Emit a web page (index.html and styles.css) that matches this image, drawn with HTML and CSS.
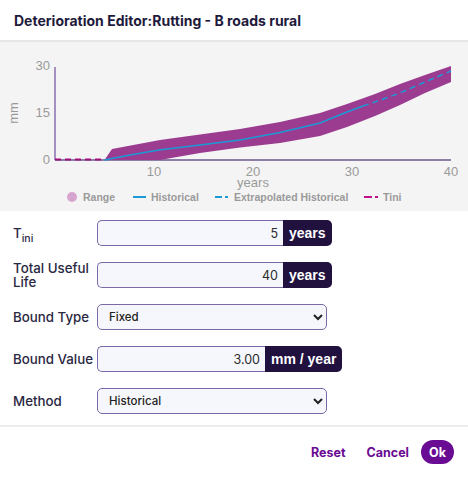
FILE: index.html
```html
<!DOCTYPE html>
<html lang="en">
<head>
    <meta charset="UTF-8">
    <meta name="viewport" content="width=device-width, initial-scale=1.0">
    <title>Deterioration Editor</title>
    <link rel="stylesheet" href="styles.css">
</head>
<body>
    <div class="dialog">
        <div class="dialog-head">
            <h1>Deterioration Editor:Rutting - B roads rural</h1>
        </div>

        <div class="chart">
            <svg width="468" height="169" viewBox="0 42 468 169">
                <!-- axes -->
                <line x1="55" y1="67" x2="55" y2="160" class="axis-y"/>
                <line x1="55" y1="160" x2="451" y2="160" class="axis-x"/>

                <!-- tick labels -->
                <text x="50" y="70" class="tick" text-anchor="end">30</text>
                <text x="50" y="117" class="tick" text-anchor="end">15</text>
                <text x="50" y="164" class="tick" text-anchor="end">0</text>
                <text x="154" y="176" class="tick" text-anchor="middle">10</text>
                <text x="253" y="176" class="tick" text-anchor="middle">20</text>
                <text x="352" y="176" class="tick" text-anchor="middle">30</text>
                <text x="451" y="176" class="tick" text-anchor="middle">40</text>
                <text x="253" y="187" class="tick" text-anchor="middle">years</text>
                <text x="0" y="0" class="tick" text-anchor="middle" transform="translate(18 113) rotate(-90)">mm</text>

                <!-- range band -->
                <polygon class="band" points="104.5,160 112,149 160,140 200,134.5 240,129 280,122 320,113 347,104 375,94 400,84 425,75 451,66 451,82 425,93 400,105 375,116 347,127 320,136 280,143 240,147.5 200,153 160,160"/>

                <!-- historical -->
                <polyline class="hist" points="104.5,160 130,155 159,150 200,145 240,140 280,132.5 320,123 347,112 363,106"/>
                <polyline class="extra" points="363,106 375,102 400,93 425,82 451,71"/>

                <!-- tini -->
                <line x1="55" y1="159.5" x2="105" y2="159.5" class="tini"/>

                <!-- legend -->
                <circle cx="72" cy="197" r="5" fill="#d6a5cf"/>
                <text x="83" y="201" class="legend">Range</text>
                <line x1="133" y1="197" x2="146" y2="197" stroke="#1b9ad6" stroke-width="2"/>
                <text x="151" y="201" class="legend">Historical</text>
                <line x1="215" y1="197" x2="229" y2="197" stroke="#1b9ad6" stroke-width="2" stroke-dasharray="7 3 3 3"/>
                <text x="234" y="201" class="legend">Extrapolated Historical</text>
                <line x1="364" y1="197" x2="380" y2="197" stroke="#c0108a" stroke-width="2" stroke-dasharray="8 3 3 3"/>
                <text x="383" y="201" class="legend">Tini</text>
            </svg>
        </div>

        <form class="fields">
            <div class="row">
                <label>T<sub>ini</sub></label>
                <div class="group">
                    <input type="text" value="5" class="w-years">
                    <span class="unit">years</span>
                </div>
            </div>
            <div class="row">
                <label>Total Useful Life</label>
                <div class="group">
                    <input type="text" value="40" class="w-years">
                    <span class="unit">years</span>
                </div>
            </div>
            <div class="row">
                <label>Bound Type</label>
                <select>
                    <option>Fixed</option>
                </select>
            </div>
            <div class="row">
                <label>Bound Value</label>
                <div class="group">
                    <input type="text" value="3.00" class="w-rate">
                    <span class="unit">mm / year</span>
                </div>
            </div>
            <div class="row">
                <label>Method</label>
                <select>
                    <option>Historical</option>
                </select>
            </div>
        </form>

        <div class="actions">
            <button type="button" class="link reset">Reset</button>
            <button type="button" class="link cancel">Cancel</button>
            <button type="button" class="ok">Ok</button>
        </div>
    </div>
</body>
</html>
```

FILE: styles.css
```css
body {
    margin: 0;
    font-family: Inter, "Noto Sans", sans-serif;
    color: #26243f;
    background: #fff;
}
.dialog {
    width: 468px;
}
.dialog-head {
    height: 40px;
    display: flex;
    align-items: center;
    padding: 0 14px;
    border-bottom: 2px solid #e6e6e6;
}
h1 {
    margin: 0;
    font-size: 14px;
    font-weight: 700;
    color: #1e1a3c;
}

/* chart */
.chart {
    background: #f4f4f4;
    height: 169px;
}
.chart svg {
    display: block;
}
.axis-y {
    stroke: #8770b0;
    stroke-width: 1.5;
}
.axis-x {
    stroke: #8d7fa8;
    stroke-width: 2;
}
.tick {
    font-family: "Liberation Sans", Arial, sans-serif;
    font-size: 13px;
    fill: #9a9a9a;
}
.legend {
    font-family: "Liberation Sans", Arial, sans-serif;
    font-size: 10.5px;
    font-weight: 700;
    fill: #9a9a9a;
}
.band {
    fill: #9b3c90;
}
.hist {
    fill: none;
    stroke: #1b9ad6;
    stroke-width: 1.5;
}
.extra {
    fill: none;
    stroke: #1b9ad6;
    stroke-width: 1.5;
    stroke-dasharray: 6 4;
}
.tini {
    stroke: #a0107a;
    stroke-width: 2;
    stroke-dasharray: 6 4;
}

/* form */
.fields {
    display: flex;
    flex-direction: column;
    gap: 16px;
    padding: 9px 0 11px 13px;
    margin: 0;
    border-bottom: 2px solid #ececec;
}
.row {
    display: flex;
    align-items: center;
    height: 26px;
}
.row label {
    width: 84px;
    font-size: 13.3px;
    font-weight: 500;
    line-height: 14px;
    color: #2a2842;
}
.row label sub {
    font-size: 10.5px;
    vertical-align: -4px;
    line-height: 0;
}
.group {
    display: flex;
    height: 26px;
}
.group input {
    box-sizing: border-box;
    height: 26px;
    border: 1px solid #7b69a6;
    border-right: none;
    border-radius: 5px 0 0 5px;
    background: #f6f7fd;
    text-align: right;
    padding: 0 5px;
    font-family: Inter, sans-serif;
    font-size: 12.5px;
    color: #2a2a2a;
    outline: none;
}
.w-years {
    width: 186px;
}
.w-rate {
    width: 168px;
}
.unit {
    display: flex;
    align-items: center;
    padding: 0 6px;
    background: #21113f;
    color: #fff;
    font-family: "Liberation Sans", Arial, sans-serif;
    font-weight: 700;
    font-size: 14px;
    border-radius: 0 5px 5px 0;
}
select {
    box-sizing: border-box;
    width: 230px;
    height: 26px;
    border: 1px solid #7b69a6;
    border-radius: 5px;
    background: #f6f7fd;
    padding: 0 7px;
    font-family: Inter, sans-serif;
    font-size: 11.5px;
    font-weight: 500;
    color: #222;
}

/* footer */
.actions {
    display: flex;
    justify-content: flex-end;
    align-items: center;
    padding: 13px 14px;
}
.actions button {
    border: none;
    background: none;
    font-family: Inter, sans-serif;
    font-size: 12.5px;
    font-weight: 700;
    color: #6a0b93;
    padding: 0;
    cursor: pointer;
}
.reset {
    margin-right: 21px;
}
.cancel {
    margin-right: 12px;
}
.actions .ok {
    width: 33px;
    height: 24px;
    border-radius: 12px;
    background: #6a0b93;
    color: #fff;
}
```
